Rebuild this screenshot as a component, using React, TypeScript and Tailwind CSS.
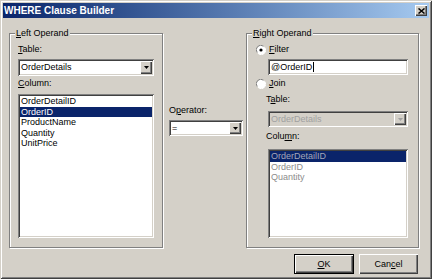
import React from "react";

const raised =
  "shadow-[inset_1px_1px_0_#fff,inset_-1px_-1px_0_#404040,inset_-2px_-2px_0_#808080]";
const sunken =
  "shadow-[inset_1px_1px_0_#808080,inset_-1px_-1px_0_#fff,inset_2px_2px_0_#404040,inset_-2px_-2px_0_#d4d0c8]";

function U({ children }: { children: React.ReactNode }) {
  return <span className="underline underline-offset-[1px]">{children}</span>;
}

function Arrow({ disabled }: { disabled?: boolean }) {
  return (
    <svg width="5" height="3" viewBox="0 0 5 3">
      <path d="M0 0h5L2.5 3z" fill={disabled ? "#a0a0a0" : "#000"} />
    </svg>
  );
}

function Combo({
  value,
  h,
  disabled,
}: {
  value: string;
  h: string;
  disabled?: boolean;
}) {
  return (
    <div
      className={`flex items-center p-[2px] ${h} ${sunken} ${
        disabled ? "bg-[#d4d0c8] text-[#a0a0a0]" : "bg-white text-black"
      }`}
    >
      <span className="flex-1 truncate pl-[1px]">{value}</span>
      <div className={`flex h-full w-[12px] items-center justify-center bg-[#d4d0c8] ${raised}`}>
        <Arrow disabled={disabled} />
      </div>
    </div>
  );
}

function Radio({ checked }: { checked?: boolean }) {
  return (
    <svg width="10" height="10" viewBox="0 0 10 10">
      <circle cx="5" cy="5" r="4.5" fill="#fff" />
      <path d="M1.2 7.5A4.5 4.5 0 0 1 7.5 1.2" stroke="#808080" strokeWidth="1" fill="none" />
      <path d="M8.8 2.5A4.5 4.5 0 0 1 2.5 8.8" stroke="#fff" strokeWidth="1" fill="none" />
      {checked && <circle cx="5" cy="5" r="1.6" fill="#000" />}
    </svg>
  );
}

function Group({
  legend,
  className,
  children,
}: {
  legend: React.ReactNode;
  className: string;
  children: React.ReactNode;
}) {
  return (
    <div
      className={`relative flex flex-col border border-[#808080] shadow-[inset_1px_1px_0_#fff,1px_1px_0_#fff] ${className}`}
    >
      <span className="absolute -top-[6px] left-[5px] bg-[#d4d0c8] px-[1px] leading-[11px]">
        {legend}
      </span>
      {children}
    </div>
  );
}

export default function App() {
  const leftCols = ["OrderDetailID", "OrderID", "ProductName", "Quantity", "UnitPrice"];
  const rightCols = ["OrderDetailID", "OrderID", "Quantity"];

  return (
    <div className="flex h-[279px] w-[432px] flex-col bg-[#d4d0c8] p-[3px] font-['Liberation_Sans',Arial,sans-serif] text-[9px] leading-[11px] text-black shadow-[inset_1px_1px_0_#d4d0c8,inset_-1px_-1px_0_#404040,inset_2px_2px_0_#fff,inset_-2px_-2px_0_#808080]">
      {/* caption */}
      <div className="flex h-[15px] items-center justify-between bg-linear-to-r from-[#0a246a] to-[#a6caf0] pl-[1px] pr-[2px]">
        <span className="text-[10px] font-bold text-white">WHERE Clause Builder</span>
        <div className={`flex h-[11px] w-[12px] items-center justify-center bg-[#d4d0c8] ${raised}`}>
          <svg width="7" height="6" viewBox="0 0 7 6">
            <path d="M0.5 0.5l6 5M6.5 0.5l-6 5" stroke="#000" strokeWidth="1.5" />
          </svg>
        </div>
      </div>

      {/* body */}
      <div className="mt-[15px] flex pl-[6px]">
        <Group
          legend={
            <>
              <U>L</U>eft Operand
            </>
          }
          className="h-[215px] w-[154px] px-[8px]"
        >
          <span className="mt-[10px]">
            <U>T</U>able:
          </span>
          <div className="mt-[4px]">
            <Combo value="OrderDetails" h="h-[17px]" />
          </div>
          <span className="mt-[2px]">
            <U>C</U>olumn:
          </span>
          <div className={`mt-[5px] h-[144px] bg-white p-[2px] ${sunken}`}>
            {leftCols.map((c, i) => (
              <div
                key={c}
                className={`h-[10.5px] pl-[1px] leading-[10.5px] ${
                  i === 1 ? "bg-[#0a246a] text-white" : ""
                }`}
              >
                {c}
              </div>
            ))}
          </div>
        </Group>

        <div className="ml-[6px] flex w-[74px] flex-col pt-[72px]">
          <span>
            O<U>p</U>erator:
          </span>
          <div className="mt-[4px]">
            <Combo value="=" h="h-[16px]" />
          </div>
        </div>

        <Group
          legend={
            <>
              <U>R</U>ight Operand
            </>
          }
          className="ml-[3px] h-[215px] w-[173px] pl-[9px] pr-[10px]"
        >
          <div className="mt-[10px] flex h-[11px] items-center gap-[3px]">
            <Radio checked />
            <span>
              <U>F</U>ilter
            </span>
          </div>
          <div className={`ml-[12px] mt-[4px] flex h-[16px] items-center bg-white px-[3px] ${sunken}`}>
            <span>@OrderID</span>
            <span className="ml-[1px] h-[10px] w-[1px] bg-black" />
          </div>
          <div className="mt-[3px] flex h-[11px] items-center gap-[3px]">
            <Radio />
            <span>
              <U>J</U>oin
            </span>
          </div>
          <span className="ml-[10px] mt-[5px]">
            T<U>a</U>ble:
          </span>
          <div className="ml-[12px] mt-[6px]">
            <Combo value="OrderDetails" h="h-[16px]" disabled />
          </div>
          <span className="ml-[10px] mt-[4px]">
            Colu<U>m</U>n:
          </span>
          <div className={`ml-[12px] mt-[7px] h-[89px] bg-white p-[2px] ${sunken}`}>
            {rightCols.map((c, i) => (
              <div
                key={c}
                className={`h-[10.5px] pl-[1px] leading-[10.5px] ${
                  i === 0 ? "bg-[#0a246a] text-[#a4a6b8]" : "text-[#8c8c8c]"
                }`}
              >
                {c}
              </div>
            ))}
          </div>
        </Group>
      </div>

      {/* buttons */}
      <div className="mt-[6px] flex justify-end gap-[5px] pr-[11px]">
        <button className="h-[20px] w-[60px] border border-black bg-[#d4d0c8]">
          <div className={`flex h-full w-full items-center justify-center ${raised}`}>
            <span>
              <U>O</U>K
            </span>
          </div>
        </button>
        <button
          className={`flex h-[20px] w-[59px] items-center justify-center bg-[#d4d0c8] ${raised}`}
        >
          <span>
            Can<U>c</U>el
          </span>
        </button>
      </div>
    </div>
  );
}
